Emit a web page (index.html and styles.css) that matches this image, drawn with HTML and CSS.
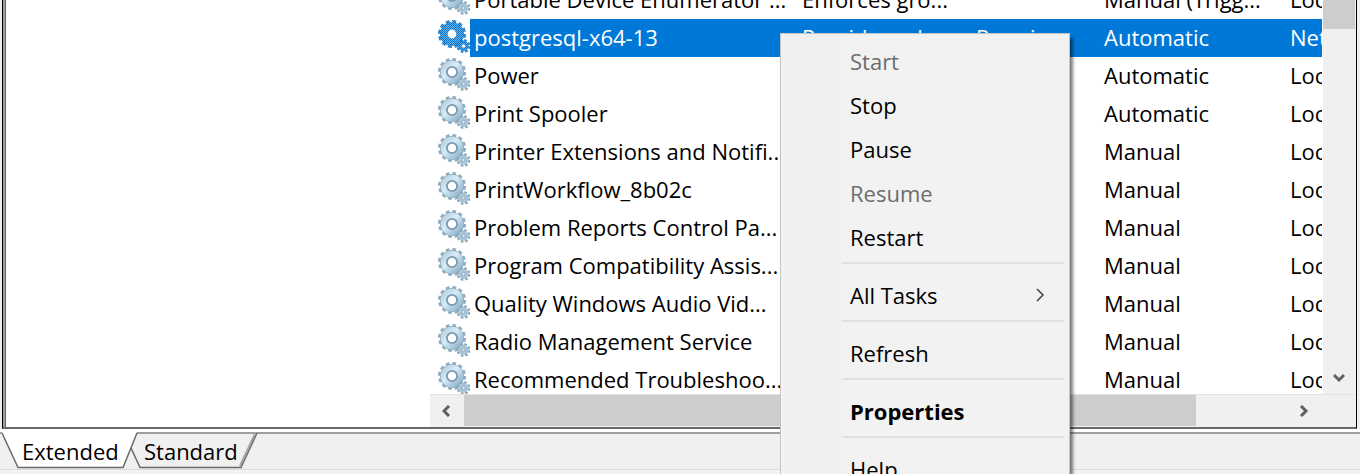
FILE: index.html
```html
<!DOCTYPE html>
<html lang="en">

<head>
  <meta charset="UTF-8" />
  <title>Services</title>
  <link rel="stylesheet" href="styles.css">
</head>

<body>
  <svg class="defs" aria-hidden="true">
    <defs>
      <linearGradient id="steel" x1="0" y1="0" x2="1" y2="1">
        <stop offset="0" stop-color="#b9d0de" />
        <stop offset="0.4" stop-color="#d6ecf8" />
        <stop offset="1" stop-color="#8fb4cc" />
      </linearGradient>
      <pattern id="dither" width="2" height="2" patternUnits="userSpaceOnUse">
        <rect width="2" height="2" fill="#0078d7" fill-opacity="0.35" />
        <rect width="1" height="1" fill="#0078d7" />
        <rect x="1" y="1" width="1" height="1" fill="#0078d7" />
      </pattern>
      <symbol id="gears" viewBox="0 0 32 36">
        <circle cx="14" cy="14" r="12" fill="none" stroke="#8fabbd" stroke-width="4" stroke-dasharray="3.6 2.68" />
        <circle cx="14" cy="14" r="8.2" fill="none" stroke="#93b0c3" stroke-width="7.6" />
        <circle cx="14" cy="14" r="8.2" fill="none" stroke="url(#steel)" stroke-width="6" />
        <circle cx="14" cy="14" r="5.2" fill="none" stroke="#7f9bb0" stroke-width="1.8" />
        <circle cx="25.5" cy="26" r="5.4" fill="none" stroke="#8aa6b8" stroke-width="3" stroke-dasharray="2.4 1.84" />
        <circle cx="25.5" cy="26" r="3.4" fill="none" stroke="#a9c6d8" stroke-width="3.4" />
        <circle cx="25.5" cy="26" r="1.7" fill="#dcebf4" stroke="#7f9bae" stroke-width="0.8" />
      </symbol>
      <symbol id="gears-selected" viewBox="0 0 32 36">
        <circle cx="14" cy="14" r="12" fill="none" stroke="#8fabbd" stroke-width="4" stroke-dasharray="3.6 2.68" />
        <circle cx="14" cy="14" r="8.2" fill="none" stroke="#b4d0e2" stroke-width="7.6" />
        <circle cx="25.5" cy="26" r="5.4" fill="none" stroke="#8aa6b8" stroke-width="3" stroke-dasharray="2.4 1.84" />
        <circle cx="25.5" cy="26" r="3.4" fill="none" stroke="#a9c6d8" stroke-width="3.4" />
        <circle cx="14" cy="14" r="12" fill="none" stroke="url(#dither)" stroke-width="4" stroke-dasharray="3.6 2.68" />
        <circle cx="14" cy="14" r="8.2" fill="none" stroke="url(#dither)" stroke-width="7.6" />
        <circle cx="25.5" cy="26" r="5.4" fill="none" stroke="url(#dither)" stroke-width="3" stroke-dasharray="2.4 1.84" />
        <circle cx="25.5" cy="26" r="3.4" fill="none" stroke="url(#dither)" stroke-width="3.4" />
      </symbol>
    </defs>
  </svg>

  <main class="window">
    <div class="frame">
      <div class="details"></div>
      <section class="list">
        <div class="rows">
          <table class="services">
            <colgroup>
              <col class="col-icon">
              <col class="col-name">
              <col class="col-description">
              <col class="col-status">
              <col class="col-startup">
              <col>
            </colgroup>
            <tbody>
              <tr>
                <td class="icon"><svg><use href="#gears" /></svg></td>
                <td>Portable Device Enumerator ...</td>
                <td>Enforces gro...</td>
                <td></td>
                <td>Manual (Trigg...</td>
                <td>Loc</td>
              </tr>
              <tr class="selected">
                <td class="icon"><svg><use href="#gears-selected" /></svg></td>
                <td>postgresql-x64-13</td>
                <td>Provides rela...</td>
                <td>Running</td>
                <td>Automatic</td>
                <td>Net</td>
              </tr>
              <tr>
                <td class="icon"><svg><use href="#gears" /></svg></td>
                <td>Power</td>
                <td></td>
                <td></td>
                <td>Automatic</td>
                <td>Loc</td>
              </tr>
              <tr>
                <td class="icon"><svg><use href="#gears" /></svg></td>
                <td>Print Spooler</td>
                <td></td>
                <td></td>
                <td>Automatic</td>
                <td>Loc</td>
              </tr>
              <tr>
                <td class="icon"><svg><use href="#gears" /></svg></td>
                <td>Printer Extensions and Notifi...</td>
                <td></td>
                <td></td>
                <td>Manual</td>
                <td>Loc</td>
              </tr>
              <tr>
                <td class="icon"><svg><use href="#gears" /></svg></td>
                <td>PrintWorkflow_8b02c</td>
                <td></td>
                <td></td>
                <td>Manual</td>
                <td>Loc</td>
              </tr>
              <tr>
                <td class="icon"><svg><use href="#gears" /></svg></td>
                <td>Problem Reports Control Pa...</td>
                <td></td>
                <td></td>
                <td>Manual</td>
                <td>Loc</td>
              </tr>
              <tr>
                <td class="icon"><svg><use href="#gears" /></svg></td>
                <td>Program Compatibility Assis...</td>
                <td></td>
                <td></td>
                <td>Manual</td>
                <td>Loc</td>
              </tr>
              <tr>
                <td class="icon"><svg><use href="#gears" /></svg></td>
                <td>Quality Windows Audio Vid...</td>
                <td></td>
                <td></td>
                <td>Manual</td>
                <td>Loc</td>
              </tr>
              <tr>
                <td class="icon"><svg><use href="#gears" /></svg></td>
                <td>Radio Management Service</td>
                <td></td>
                <td></td>
                <td>Manual</td>
                <td>Loc</td>
              </tr>
              <tr>
                <td class="icon"><svg><use href="#gears" /></svg></td>
                <td>Recommended Troubleshoo...</td>
                <td></td>
                <td></td>
                <td>Manual</td>
                <td>Loc</td>
              </tr>
            </tbody>
          </table>
        </div>
        <div class="scroll-y">
          <div class="thumb-y"></div>
          <button class="arrow" aria-label="Scroll down">
            <svg width="12" height="10" viewBox="0 0 12 10"><path d="M1 2l5 5 5-5" /></svg>
          </button>
        </div>
        <div class="scroll-x">
          <button class="arrow" aria-label="Scroll left">
            <svg width="10" height="12" viewBox="0 0 10 12"><path d="M7 1L2 6l5 5" /></svg>
          </button>
          <div class="track-x">
            <div class="thumb-x"></div>
          </div>
          <button class="arrow" aria-label="Scroll right">
            <svg width="10" height="12" viewBox="0 0 10 12"><path d="M2 1l5 5-5 5" /></svg>
          </button>
        </div>
      </section>
    </div>

    <div class="tabs">
      <button class="tab tab-extended">
        <svg width="138" height="38" viewBox="0 0 138 38">
          <path d="M0 0l16 35h105L135 0z" fill="#fff" />
          <path d="M0 1l16 34.5h105L135 1" fill="none" stroke="#696969" stroke-width="1.5" />
        </svg>
        <span>Extended</span>
      </button>
      <button class="tab tab-standard">
        <svg width="128" height="38" viewBox="0 0 128 38">
          <path d="M1 16l9 19.5h101L127 1" fill="none" stroke="#696969" stroke-width="1.5" />
          <path d="M110 34L125 2" fill="none" stroke="#a0a0a0" stroke-width="2" />
        </svg>
        <span>Standard</span>
      </button>
    </div>
    <footer class="status"></footer>
  </main>

  <div class="menu" role="menu">
    <button role="menuitem" disabled>Start</button>
    <button role="menuitem">Stop</button>
    <button role="menuitem">Pause</button>
    <button role="menuitem" disabled>Resume</button>
    <button role="menuitem">Restart</button>
    <hr>
    <button role="menuitem">All Tasks
      <svg width="10" height="14" viewBox="0 0 10 14"><path d="M1 1l6 6-6 6" /></svg>
    </button>
    <hr>
    <button role="menuitem">Refresh</button>
    <hr>
    <button role="menuitem" class="default">Properties</button>
    <hr>
    <button role="menuitem">Help</button>
  </div>
</body>

</html>
```
FILE: styles.css
```css
* {
  box-sizing: border-box;
}

html,
body {
  margin: 0;
  height: 100%;
  overflow: hidden;
}

body,
button {
  font-family: 'Open Sans', 'Noto Sans', sans-serif;
  font-size: 22px;
  line-height: 30px;
  color: #000;
}

button {
  border: 0;
  padding: 0;
  background: none;
}

.defs {
  position: absolute;
  width: 0;
  height: 0;
}

.window {
  display: flex;
  flex-direction: column;
  height: 100vh;
  overflow: hidden;
  background: #f0f0f0;
}

.frame {
  display: flex;
  flex: 1;
  min-height: 0;
  margin: 0 3px 0 2px;
  border-left: 1px solid #000;
  border-right: 1px solid #000;
  border-bottom: 2px solid #696969;
  background: #fff;
}

.details {
  flex: none;
  width: 427px;
  border-left: 2px solid #a0a0a0;
  box-shadow: inset 1px 0 #696969;
}

.list {
  display: grid;
  flex: 1;
  grid-template-columns: 1fr 34px;
  grid-template-rows: 1fr 33px;
  min-width: 0;
}

.rows {
  min-height: 0;
  overflow: hidden;
}

/* scrolled half a row down */
.services {
  width: 100%;
  margin-top: -19px;
  table-layout: fixed;
  border-collapse: collapse;
}

.col-icon {
  width: 40px;
}

.col-name {
  width: 322px;
}

.col-description {
  width: 174px;
}

.col-status {
  width: 128px;
}

.col-startup {
  width: 186px;
}

.services td {
  height: 38px;
  padding: 0 0 2px 10px;
  overflow: hidden;
  white-space: nowrap;
}

.services td:nth-child(2) {
  padding-left: 4px;
}

.services .icon {
  padding: 0 0 0 8px;
}

.icon svg {
  display: block;
  width: 32px;
  height: 36px;
}

.selected td:not(.icon) {
  background: #0078d7;
  color: #fff;
}

.scroll-y {
  display: flex;
  flex-direction: column;
  justify-content: space-between;
  padding-right: 1px;
  border-left: 1px solid #fff;
  background: #f0f0f0;
}

.thumb-y {
  height: 29px;
  background: #cdcdcd;
}

.scroll-x {
  display: flex;
  grid-column: 1 / -1;
  padding-right: 35px;
  border-top: 1px solid #e3e3e3;
  background: #f0f0f0;
}

.track-x {
  flex: 1;
}

.thumb-x {
  width: 89%;
  height: 31px;
  background: #cdcdcd;
}

.arrow {
  display: flex;
  align-items: center;
  justify-content: center;
  width: 32px;
  height: 32px;
}

.scroll-x .arrow {
  width: 34px;
}

.arrow path {
  fill: none;
  stroke: #606060;
  stroke-width: 3;
}

.tabs {
  display: flex;
  flex: none;
  height: 41px;
  padding-left: 2px;
  border-top: 3px solid #fff;
  border-bottom: 1px solid #dcdcdc;
  box-shadow: inset 0 2px #a0a0a0;
}

.tab {
  position: relative;
  height: 37px;
  text-align: left;
}

.tab svg {
  position: absolute;
  top: 0;
  left: 0;
}

.tab span {
  position: relative;
}

.tab-extended {
  width: 128px;
  padding-left: 20px;
}

.tab-standard {
  width: 128px;
  padding-left: 14px;
}

.status {
  flex: none;
  height: 4px;
  background: #f3f3f3;
}

.menu {
  position: absolute;
  top: 33px;
  left: 780px;
  width: 290px;
  padding: 6px 5px;
  border: 1px solid #c4c4c4;
  background: linear-gradient(90deg, #f2f2f2 5px, #f0f0f0 5px, #f0f0f0 61px, #f2f2f2 61px);
  box-shadow: 3px 5px 3px rgba(0, 0, 0, 0.5);
}

.menu button {
  display: flex;
  align-items: center;
  justify-content: space-between;
  width: 100%;
  height: 44px;
  padding: 0 18px 2px 64px;
}

.menu button:disabled {
  color: #6d6d6d;
}

.menu .default {
  font-weight: 700;
}

.menu hr {
  height: 2px;
  margin: 2px 0 10px 56px;
  border: 0;
  background: #e0e0e0;
}

.menu path {
  fill: none;
  stroke: #444;
  stroke-width: 1.5;
}
```
